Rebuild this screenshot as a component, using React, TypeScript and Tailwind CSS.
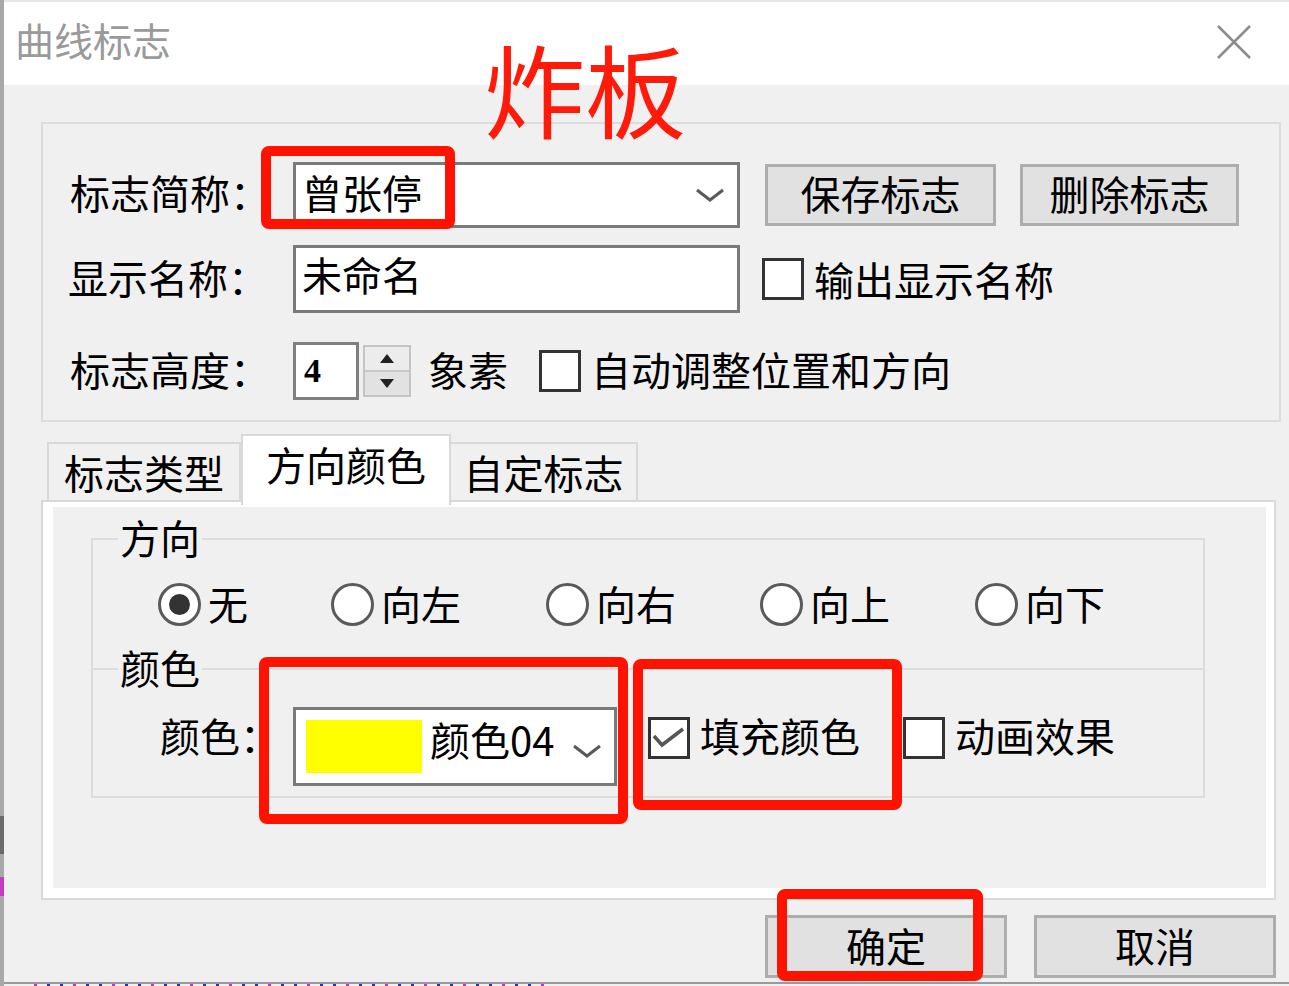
import React from "react";

const Chevron = () => (
  <svg width="30" height="16" viewBox="0 0 30 16">
    <polyline points="2,3 15,13 28,3" fill="none" stroke="#5a5a5a" strokeWidth="3" />
  </svg>
);

const CheckBox = ({ checked = false }: { checked?: boolean }) => (
  <div className="w-[42px] h-[42px] border-[3px] border-[#333333] bg-white shrink-0 flex items-center justify-center">
    {checked && (
      <svg width="36" height="36" viewBox="0 0 36 36">
        <polyline points="3,16 11,25 32,9" fill="none" stroke="#555555" strokeWidth="3.5" />
      </svg>
    )}
  </div>
);

const Radio = ({ checked = false }: { checked?: boolean }) => (
  <div className="w-[43px] h-[43px] rounded-full border-[3px] border-[#5a5a5a] bg-white shrink-0 flex items-center justify-center">
    {checked && <div className="w-[21px] h-[21px] rounded-full bg-[#333333]" />}
  </div>
);

const RadioItem = ({ label, checked, w }: { label: string; checked?: boolean; w: string }) => (
  <div className={`flex items-center ${w}`}>
    <Radio checked={checked} />
    <span className="ml-[7px] text-[40px] leading-none -mt-[4px]">{label}</span>
  </div>
);

export default function App() {
  return (
    <div className="w-[1289px] h-[986px] relative overflow-hidden bg-[#f0f0f0] flex text-black font-['Noto_Sans_CJK_SC',sans-serif]">
      {/* left background strip */}
      <div className="w-[4px] h-full flex flex-col bg-[#a8a8a8]">
        <div className="h-[816px]" />
        <div className="h-[38px] bg-[#6a6a6a]" />
        <div className="h-[23px]" />
        <div className="h-[19px] bg-[#c43cc4]" />
      </div>

      {/* dialog */}
      <div className="flex-1 flex flex-col">
        {/* title bar */}
        <div className="h-[85px] bg-white flex items-center justify-between border-t-2 border-[#e6e6e6]">
          <span className="pl-[11px] text-[39px] leading-none text-[#9a9a9a] -mt-[8px]">曲线标志</span>
          <svg className="mr-[38px] -mt-[4px]" width="34" height="34" viewBox="0 0 34 34">
            <line x1="1" y1="1" x2="33" y2="33" stroke="#8c8c8c" strokeWidth="2.5" />
            <line x1="33" y1="1" x2="1" y2="33" stroke="#8c8c8c" strokeWidth="2.5" />
          </svg>
        </div>

        {/* top group */}
        <div className="ml-[37px] mt-[37px] w-[1240px] h-[300px] border-2 border-[#dcdcdc] flex flex-col pl-[27px] pt-[38px]">
          {/* row 1 */}
          <div className="flex items-center h-[66px]">
            <span className="w-[223px] text-[40px] leading-none -mt-[6px]">标志简称：</span>
            <div className="w-[447px] h-[66px] border-[3px] border-[#7a7a7a] bg-white flex items-center justify-between pl-[6px] pr-[12px]">
              <span className="text-[40px] leading-none -mt-[6px]">曾张停</span>
              <Chevron />
            </div>
            <button className="ml-[25px] w-[231px] h-[62px] bg-[#e1e1e1] border-[3px] border-[#adadad] flex items-center justify-center">
              <span className="text-[40px] leading-none -mt-[4px]">保存标志</span>
            </button>
            <button className="ml-[24px] w-[219px] h-[62px] bg-[#e1e1e1] border-[3px] border-[#adadad] flex items-center justify-center">
              <span className="text-[40px] leading-none -mt-[4px]">删除标志</span>
            </button>
          </div>
          {/* row 2 */}
          <div className="flex items-center h-[68px] mt-[17px]">
            <span className="w-[223px] text-[40px] leading-none -ml-[2px] -mt-[4px]">显示名称：</span>
            <div className="w-[447px] h-[68px] border-[3px] border-[#7a7a7a] bg-white flex items-center pl-[6px] ml-[2px]">
              <span className="text-[40px] leading-none -mt-[10px]">未命名</span>
            </div>
            <div className="ml-[22px]">
              <CheckBox />
            </div>
            <span className="ml-[10px] text-[40px] leading-none">输出显示名称</span>
          </div>
          {/* row 3 */}
          <div className="flex items-center h-[58px] mt-[29px]">
            <span className="w-[223px] text-[40px] leading-none -mt-[4px]">标志高度：</span>
            <div className="w-[66px] h-[58px] border-[3px] border-[#808080] bg-white flex items-center pl-[8px]">
              <span className="text-[34px] leading-none font-bold font-['Liberation_Serif',serif]">4</span>
            </div>
            <div className="ml-[4px] w-[48px] h-[52px] border-2 border-[#c4c4c4] flex flex-col">
              <div className="flex-1 bg-[#ececec] border-b-2 border-[#c8c8c8] flex items-center justify-center">
                <svg width="14" height="9" viewBox="0 0 14 9">
                  <polygon points="7,0 14,9 0,9" fill="#222" />
                </svg>
              </div>
              <div className="flex-1 bg-[#e2e2e2] flex items-center justify-center">
                <svg width="14" height="9" viewBox="0 0 14 9">
                  <polygon points="0,0 14,0 7,9" fill="#222" />
                </svg>
              </div>
            </div>
            <span className="ml-[17px] w-[80px] text-[40px] leading-none -mt-[4px]">象素</span>
            <div className="ml-[31px]">
              <CheckBox />
            </div>
            <span className="ml-[10px] text-[40px] leading-none -mt-[4px]">自动调整位置和方向</span>
          </div>
        </div>

        {/* tabs */}
        <div className="ml-[43px] mt-[12px] h-[66px] flex items-end relative z-10">
          <div className="w-[194px] h-[58px] border-2 border-b-0 border-[#d9d9d9] bg-[#f0f0f0] flex items-center justify-center">
            <span className="text-[40px] leading-none">标志类型</span>
          </div>
          <div className="w-[210px] h-[71px] -mb-[5px] border-2 border-b-0 border-[#d9d9d9] bg-white flex items-start justify-center pt-[8px]">
            <span className="text-[40px] leading-none">方向颜色</span>
          </div>
          <div className="w-[187px] h-[58px] border-2 border-b-0 border-l-0 border-[#d9d9d9] bg-[#f0f0f0] flex items-center justify-center">
            <span className="text-[40px] leading-none">自定标志</span>
          </div>
        </div>

        {/* tab panel */}
        <div className="ml-[37px] w-[1235px] h-[400px] border-2 border-[#d9d9d9] bg-white flex pl-[10px] pr-[8px] pt-[5px] pb-[10px]">
          <div className="flex-1 bg-[#f0f0f0] flex flex-col pl-[38px] pt-[31px]">
            {/* frame 方向 */}
            <div className="w-[1114px] h-[130px] border-2 border-b-0 border-[#dcdcdc] relative flex flex-col pl-[65px] pt-[43px]">
              <span className="absolute left-[25px] -top-[23px] px-[2px] bg-[#f0f0f0] text-[40px] leading-none">方向</span>
              <div className="flex items-center">
                <RadioItem label="无" checked w="w-[173px]" />
                <RadioItem label="向左" w="w-[215px]" />
                <RadioItem label="向右" w="w-[214px]" />
                <RadioItem label="向上" w="w-[215px]" />
                <RadioItem label="向下" w="w-[200px]" />
              </div>
            </div>
            {/* frame 颜色 */}
            <div className="w-[1114px] h-[130px] border-2 border-[#dcdcdc] relative flex items-start pl-[67px] pt-[37px]">
              <span className="absolute left-[25px] -top-[23px] px-[2px] bg-[#f0f0f0] text-[40px] leading-none">颜色</span>
              <span className="mt-[10px] h-[42px] w-[133px] flex items-center text-[40px] leading-none -translate-y-[3px]">颜色：</span>
              <div className="w-[324px] h-[79px] border-[3px] border-[#7a7a7a] bg-white flex items-center pl-[10px] pr-[12px]">
                <div className="w-[116px] h-[53px] bg-[#ffff00]" />
                <span className="ml-[8px] text-[40px] leading-none -mt-[16px]">颜色04</span>
                <div className="ml-auto mt-[8px]">
                  <Chevron />
                </div>
              </div>
              <div className="ml-[31px] mt-[10px]">
                <CheckBox checked />
              </div>
              <span className="ml-[10px] mt-[10px] h-[42px] w-[160px] flex items-center text-[40px] leading-none -translate-y-[3px]">填充颜色</span>
              <div className="ml-[43px] mt-[10px]">
                <CheckBox />
              </div>
              <span className="ml-[10px] mt-[10px] h-[42px] flex items-center text-[40px] leading-none -translate-y-[3px]">动画效果</span>
            </div>
          </div>
        </div>

        {/* bottom buttons */}
        <div className="mt-[15px] flex justify-end pr-[13px] gap-[27px]">
          <button className="w-[242px] h-[63px] bg-[#e1e1e1] border-[3px] border-[#adadad] flex items-center justify-center">
            <span className="text-[40px] leading-none -mt-[4px]">确定</span>
          </button>
          <button className="w-[242px] h-[63px] bg-[#e1e1e1] border-[3px] border-[#adadad] flex items-center justify-center">
            <span className="text-[40px] leading-none -mt-[4px]">取消</span>
          </button>
        </div>

        {/* bottom background strip */}
        <div className="mt-auto h-[4px] border-t-2 border-[#9a9a9a] bg-[#f0f0f0] flex gap-[10px] pl-[30px]">
          {Array.from({ length: 40 }).map((_, i) => (
            <div key={i} className={`w-[3px] h-[2px] ${i % 3 === 0 ? "bg-[#e020e0]" : "bg-[#2030e0]"}`} />
          ))}
        </div>
      </div>

      {/* annotations */}
      <div className="absolute left-[484px] top-[37px] text-[101px] leading-none text-[#ff1a0a] font-normal">炸板</div>
      <div className="absolute left-[261px] top-[146px] w-[194px] h-[83px] border-[10px] border-[#ff1300] rounded-[8px]" />
      <div className="absolute left-[259px] top-[657px] w-[369px] h-[167px] border-[10px] border-[#ff1300] rounded-[8px]" />
      <div className="absolute left-[633px] top-[659px] w-[269px] h-[151px] border-[10px] border-[#ff1300] rounded-[8px]" />
      <div className="absolute left-[777px] top-[889px] w-[206px] h-[92px] border-[10px] border-[#ff1300] rounded-[8px]" />
    </div>
  );
}
